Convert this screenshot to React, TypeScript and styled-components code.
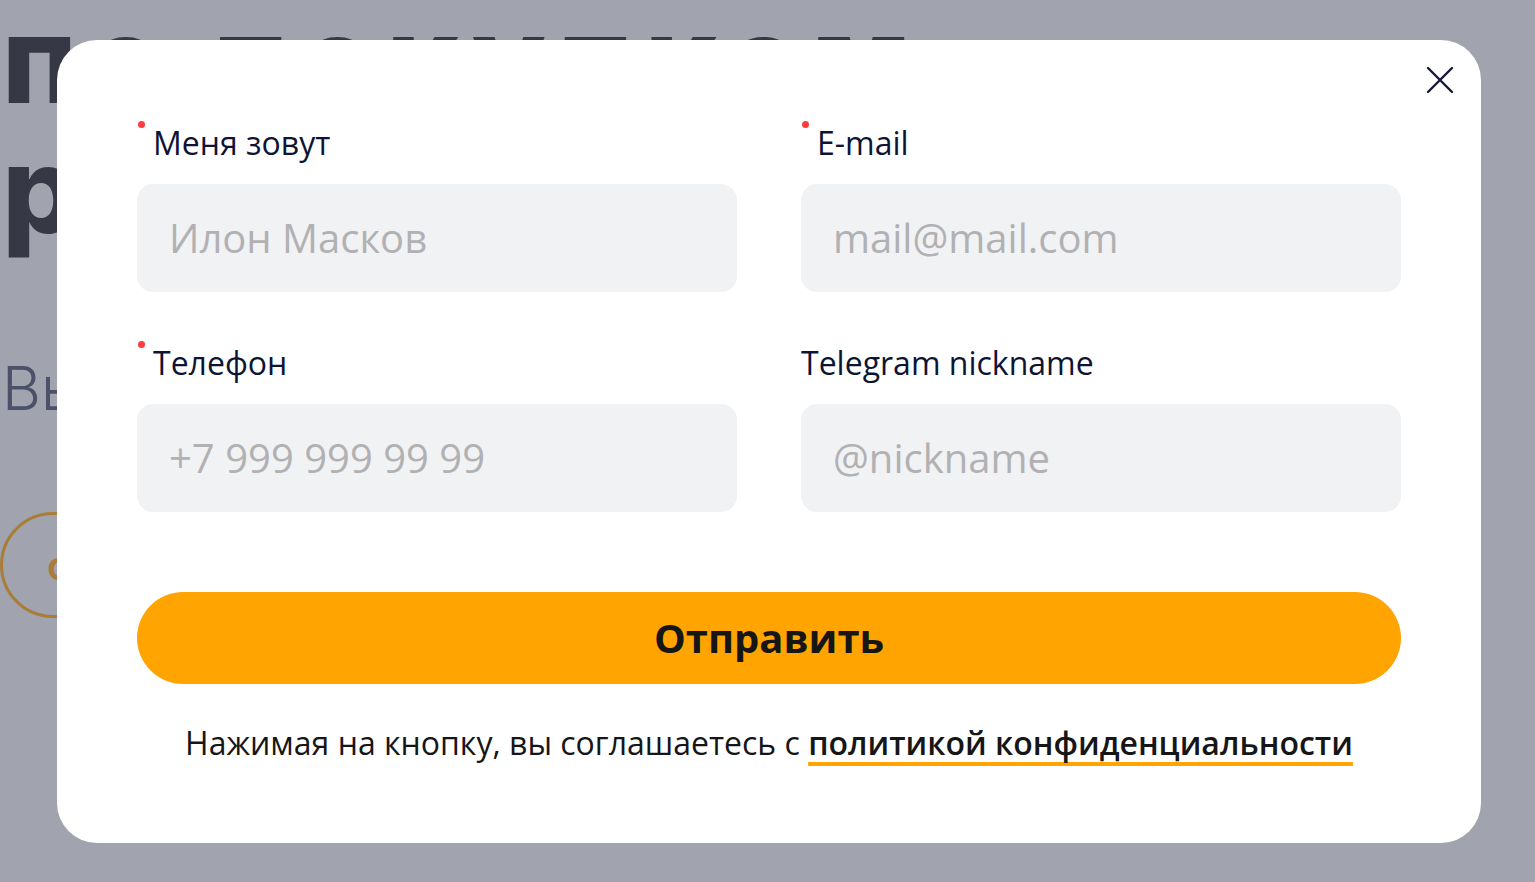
import React from "react";
import styled, { createGlobalStyle } from "styled-components";

const GlobalStyle = createGlobalStyle`
  html, body {
    margin: 0;
    padding: 0;
    height: 100%;
    overflow: hidden;
  }
  body {
    background: #a1a3ae;
    font-family: "Open Sans", "Liberation Sans", sans-serif;
  }
  * {
    box-sizing: border-box;
  }
`;

const Page = styled.div`
  padding: 0 0 0 2px;
`;

const Heading = styled.h1`
  margin: -5px 0 0;
  font-family: Inter, "Liberation Sans", sans-serif;
  font-size: 120px;
  line-height: 130px;
  font-weight: 800;
  color: #363845;
  letter-spacing: 12px;
`;

const Subtitle = styled.p`
  margin: 98px 0 0;
  font-family: Inter, "Liberation Sans", sans-serif;
  font-size: 60px;
  font-weight: 300;
  line-height: 70px;
  color: #4c5068;
`;

const OutlineButton = styled.button`
  margin: 89px 0 0 -2px;
  height: 106px;
  padding: 0 44px;
  border: 3px solid #a97c38;
  border-radius: 53px;
  background: transparent;
  font-family: Inter, "Liberation Sans", sans-serif;
  font-size: 40px;
  font-weight: 600;
  color: #a97c38;
`;

const Overlay = styled.div`
  position: fixed;
  inset: 0;
  display: flex;
  align-items: center;
  justify-content: center;
  padding-left: 3px;
`;

const Modal = styled.div`
  position: relative;
  width: 1424px;
  padding: 80px;
  background: #ffffff;
  border-radius: 40px;
`;

const CloseButton = styled.button`
  position: absolute;
  top: 20px;
  right: 21px;
  width: 40px;
  height: 40px;
  padding: 0;
  border: none;
  background: transparent;
  display: flex;
  align-items: center;
  justify-content: center;
  cursor: pointer;
`;

const Fields = styled.div`
  display: grid;
  grid-template-columns: 600px 600px;
  column-gap: 64px;
  row-gap: 48px;
`;

const Field = styled.label`
  display: flex;
  flex-direction: column;
  gap: 18px;
`;

const LabelText = styled.span<{ required?: boolean }>`
  position: relative;
  padding-left: ${({ required }) => (required ? "16px" : "0")};
  font-size: 32px;
  line-height: 46px;
  color: #0d1533;

  &::before {
    content: "";
    display: ${({ required }) => (required ? "block" : "none")};
    position: absolute;
    left: 1px;
    top: 1px;
    width: 7px;
    height: 7px;
    border-radius: 50%;
    background: #ff3b3b;
  }
`;

const Input = styled.input`
  height: 108px;
  padding: 0 32px;
  border: none;
  border-radius: 16px;
  background: #f1f2f4;
  font-family: "Open Sans", "Liberation Sans", sans-serif;
  font-size: 40px;
  color: #0d1533;
  outline: none;

  &::placeholder {
    color: #b1b1b3;
  }
`;

const SubmitButton = styled.button`
  margin-top: 80px;
  width: 100%;
  height: 92px;
  border: none;
  border-radius: 46px;
  background: #ffa400;
  font-family: "Open Sans", "Liberation Sans", sans-serif;
  font-size: 40px;
  font-weight: 700;
  color: #161616;
  cursor: pointer;
`;

const Agreement = styled.p`
  margin: 38px 0 0;
  text-align: center;
  font-size: 32px;
  line-height: 41px;
  color: #161616;
`;

const PolicyLink = styled.a`
  font-weight: 600;
  color: #161616;
  text-decoration: underline;
  text-decoration-color: #ffa400;
  text-decoration-thickness: 4px;
  text-underline-offset: 7px;
  text-decoration-skip-ink: none;
`;

const fields = [
  { label: "Меня зовут", placeholder: "Илон Масков", required: true, type: "text" },
  { label: "E-mail", placeholder: "mail@mail.com", required: true, type: "email" },
  { label: "Телефон", placeholder: "+7 999 999 99 99", required: true, type: "tel" },
  { label: "Telegram nickname", placeholder: "@nickname", required: false, type: "text" },
];

export default function App() {
  return (
    <>
      <GlobalStyle />
      <Page>
        <Heading>
          по покупкам
          <br />
          работаем
        </Heading>
        <Subtitle>Вы выбираете, мы доставляем</Subtitle>
        <OutlineButton>случайно</OutlineButton>
      </Page>
      <Overlay>
        <Modal role="dialog">
          <CloseButton aria-label="Закрыть">
            <svg width="28" height="28" viewBox="0 0 28 28" fill="none">
              <path
                d="M2 2L26 26M26 2L2 26"
                stroke="#141a33"
                strokeWidth="2.4"
                strokeLinecap="round"
              />
            </svg>
          </CloseButton>
          <Fields>
            {fields.map((f) => (
              <Field key={f.label}>
                <LabelText required={f.required}>{f.label}</LabelText>
                <Input type={f.type} placeholder={f.placeholder} />
              </Field>
            ))}
          </Fields>
          <SubmitButton>Отправить</SubmitButton>
          <Agreement>
            Нажимая на кнопку, вы соглашаетесь с{" "}
            <PolicyLink href="#">политикой конфиденциальности</PolicyLink>
          </Agreement>
        </Modal>
      </Overlay>
    </>
  );
}
